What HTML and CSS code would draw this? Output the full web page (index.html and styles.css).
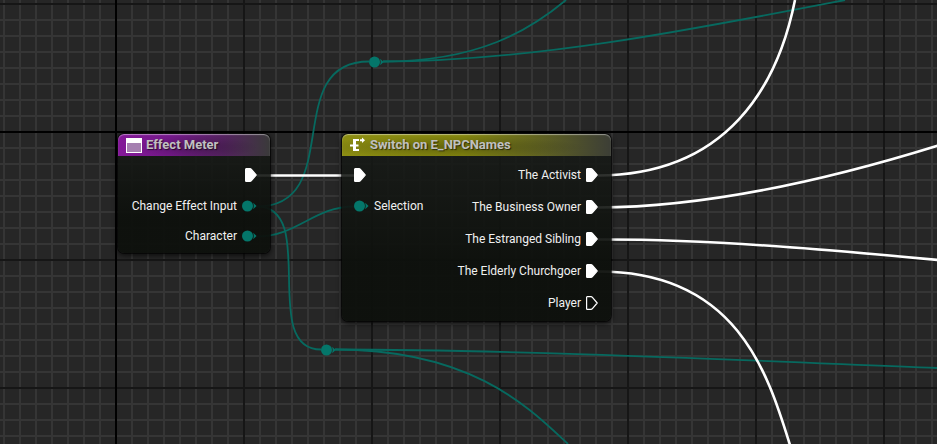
FILE: index.html
```html
<!DOCTYPE html>
<html lang="en">
<head>
<meta charset="utf-8">
<title>Blueprint Graph</title>
<link rel="stylesheet" href="styles.css">
</head>
<body>
<svg class="defs" width="0" height="0" aria-hidden="true">
  <symbol id="exec" viewBox="0 0 12 14">
    <path d="M1.200 .7H5Q5.800 .7 6.400 1.400L11.200 7L6.400 12.600Q5.800 13.300 5 13.300H1.200Q.6 13.300 .6 12.700V1.300Q.6 .7 1.200 .7Z" stroke-width="1.200" stroke-linejoin="round"/>
  </symbol>
  <symbol id="data" viewBox="0 0 15 12">
    <circle cx="5.500" cy="6" r="5.500"/>
    <path d="M11.200 2.800L14.600 6l-3.400 3.200q1-3.200 0-6.400z"/>
  </symbol>
</svg>
<main class="graph">
  <svg class="wires" aria-hidden="true">
    <g class="wire-data">
      <path d="M257 206.500C346 206.500 280 61.500 369 61.500"/>
      <path d="M257 206.500C319 206.500 259 349.500 321 349.500"/>
      <path d="M257 236.500C297 236.500 314 206.500 354 206.500"/>
      <path d="M383 61.500C479 61.500 530 30 566 0"/>
      <path d="M383 61.500C530 61.500 690 30 845 0"/>
      <path d="M335 349.500C473 349.500 530 408.500 568 444"/>
      <path d="M335 349.500C520 349.500 760 361 937 368"/>
    </g>
    <g class="wire-exec">
      <path d="M257 175.500H354"/>
      <path d="M598 175.500C728 175 778 85 795 0"/>
      <path d="M598 207.500C708 207 827 180 938 145.500"/>
      <path d="M598 239.500C710 239 830 250 938 260"/>
      <path d="M598 271.500C737 271 768 374 790 445"/>
    </g>
  </svg>
  <svg class="pin-data knot knot-top" aria-hidden="true"><use href="#data"/></svg>
  <svg class="pin-data knot knot-bottom" aria-hidden="true"><use href="#data"/></svg>

  <article class="node node-meter">
    <header class="title purple">
      <svg class="icon" viewBox="0 0 16 16" aria-hidden="true">
        <rect y="1" width="16" height="15" fill="#fff"/>
        <rect x="1" y="6" width="14" height="9" fill="#a57fb0"/>
      </svg>
      <h2>Effect Meter</h2>
    </header>
    <div class="body">
      <ul class="pins outputs">
        <li class="pin exec-row"><svg class="pin-exec"><use href="#exec"/></svg></li>
        <li class="pin"><span>Change Effect Input</span><svg class="pin-data"><use href="#data"/></svg></li>
        <li class="pin"><span>Character</span><svg class="pin-data"><use href="#data"/></svg></li>
      </ul>
    </div>
  </article>

  <article class="node node-switch">
    <header class="title olive">
      <svg class="icon" viewBox="0 0 16 16" aria-hidden="true">
        <path d="M3 2h6v2H6v3.500h2.500v2H6V12h3v2H3V9.500H0v-2h3z" fill="#fff"/>
        <path d="M10 2.300h2V.5L15 3.200 12 6V4.200h-2z" fill="#fff"/>
      </svg>
      <h2>Switch on E_NPCNames</h2>
    </header>
    <div class="body">
      <ul class="pins inputs">
        <li class="pin exec-row"><svg class="pin-exec"><use href="#exec"/></svg></li>
        <li class="pin"><svg class="pin-data"><use href="#data"/></svg><span>Selection</span></li>
      </ul>
      <ul class="pins outputs">
        <li class="pin exec-row"><span>The Activist</span><svg class="pin-exec"><use href="#exec"/></svg></li>
        <li class="pin exec-row"><span>The Business Owner</span><svg class="pin-exec"><use href="#exec"/></svg></li>
        <li class="pin exec-row"><span>The Estranged Sibling</span><svg class="pin-exec"><use href="#exec"/></svg></li>
        <li class="pin exec-row"><span>The Elderly Churchgoer</span><svg class="pin-exec"><use href="#exec"/></svg></li>
        <li class="pin exec-row"><span>Player</span><svg class="pin-exec open"><use href="#exec"/></svg></li>
      </ul>
    </div>
  </article>
</main>
</body>
</html>
```
FILE: styles.css
```css
* {
  box-sizing: border-box;
}

body {
  margin: 0;
  background: #262626;
  color: #f0f0f0;
  font: 12px/16px Roboto, "Liberation Sans", sans-serif;
}

.defs {
  position: absolute;
}

/* Grid: origin axes, then 128px major lines, then 16px minor lines */
.graph {
  position: relative;
  min-height: 100vh;
  overflow: hidden;
  background-color: #262626;
  background-image:
    linear-gradient(#000, #000),
    linear-gradient(#000, #000),
    linear-gradient(90deg, #161616 2px, transparent 2px),
    linear-gradient(#161616 2px, transparent 2px),
    linear-gradient(90deg, #353535 2px, transparent 2px),
    linear-gradient(#353535 2px, transparent 2px);
  background-size: 2px 100%, 100% 2px, 128px 128px, 128px 128px, 16px 16px, 16px 16px;
  background-position: 115px 0, 0 131px, 115px 3px, 115px 3px, 3px 3px, 3px 3px;
  background-repeat: no-repeat, no-repeat, repeat, repeat, repeat, repeat;
}

.wires {
  position: absolute;
  inset: 0;
  width: 100%;
  height: 100%;
  fill: none;
}

.wire-data {
  stroke: #07695f;
  stroke-width: 1.8;
}

.wire-exec {
  stroke: #fff;
  stroke-width: 2.6;
}

.node {
  position: absolute;
  border-radius: 6px;
  background: linear-gradient(rgba(24, 27, 24, 0.86), rgba(13, 16, 12, 0.95) 70%);
  box-shadow: 0 0 0 1px rgba(0, 0, 0, 0.6), 0 2px 5px 1px rgba(0, 0, 0, 0.6);
}

.node-meter {
  left: 118px;
  top: 134px;
  width: 152px;
}

.node-switch {
  left: 342px;
  top: 134px;
  width: 269px;
}

.title {
  display: flex;
  align-items: center;
  gap: 4px;
  height: 22px;
  padding-left: 8px;
  border-radius: 6px 6px 0 0;
  box-shadow: inset 0 1px 1px rgba(255, 255, 255, 0.45);
}

.title h2 {
  margin: 0;
  color: #c0c0c0;
  font-size: 13px;
  font-weight: 700;
  line-height: 16px;
  text-shadow: 1px 1px 1px rgba(0, 0, 0, 0.6);
}

.purple {
  background:
    radial-gradient(ellipse at 50% 60%, rgba(0, 0, 0, 0.25), transparent 60%),
    linear-gradient(90deg, #841898, #74198a 35%, #54235f 70%, #3a3a3a);
}

.olive {
  background:
    radial-gradient(ellipse at 40% 60%, rgba(0, 0, 0, 0.25), transparent 60%),
    linear-gradient(90deg, #8c8d12, #84860f 45%, #65671f 70%, #3c3e36);
}

.icon {
  width: 16px;
  height: 16px;
}

.body {
  display: flex;
  justify-content: space-between;
  padding: 7px 13px 6px 12px;
}

.pins {
  display: flex;
  flex-direction: column;
  gap: 8px;
  margin: 0;
  padding: 0;
  list-style: none;
}

.outputs {
  margin-left: auto;
}

.pin {
  display: flex;
  align-items: center;
  gap: 5px;
  height: 22px;
  white-space: nowrap;
}

.exec-row {
  height: 24px;
}

.outputs .pin {
  justify-content: flex-end;
}

.pin-exec {
  width: 12px;
  height: 14px;
  fill: #fff;
  stroke: #fff;
}

.open {
  fill: none;
}

.pin-data {
  width: 15px;
  height: 12px;
  fill: #04766a;
}

.knot {
  position: absolute;
}

.knot-top {
  left: 369px;
  top: 56px;
}

.knot-bottom {
  left: 321px;
  top: 344px;
}
```
